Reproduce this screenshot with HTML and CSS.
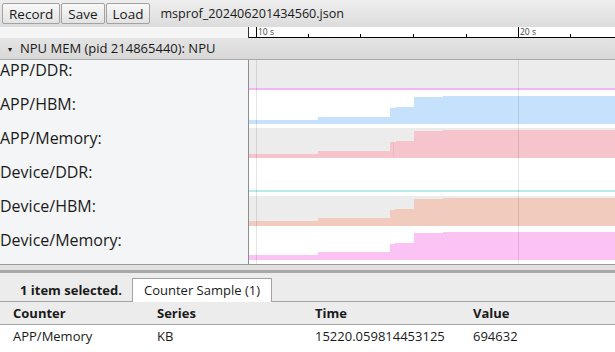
FILE: index.html
```html
<!DOCTYPE html>
<html lang="en">

<head>
    <meta charset="UTF-8">
    <title>Trace viewer</title>
    <link rel="stylesheet" href="styles.css">
</head>

<body>
    <div class="toolbar">
        <button class="btn">Record</button>
        <button class="btn">Save</button>
        <button class="btn">Load</button>
        <span class="filename">msprof_202406201434560.json</span>
    </div>

    <!-- regla de tiempo -->
    <div class="ruler-row">
        <div class="ruler-spacer"></div>
        <svg class="ruler" width="366" height="11">
            <rect x="0" y="10" width="366" height="1" fill="#000"/>
            <rect x="7" y="0" width="1" height="10" fill="#000"/>
            <rect x="269" y="0" width="1" height="10" fill="#000"/>
            <rect x="59" y="7" width="1" height="3" fill="#000"/>
            <rect x="111" y="7" width="1" height="3" fill="#000"/>
            <rect x="164" y="7" width="1" height="3" fill="#000"/>
            <rect x="217" y="7" width="1" height="3" fill="#000"/>
            <rect x="321" y="7" width="1" height="3" fill="#000"/>
            <text x="9" y="8" class="ruler-label">10 s</text>
            <text x="271" y="8" class="ruler-label">20 s</text>
        </svg>
    </div>

    <div class="group-header"><span class="twisty">&#9662;</span>NPU MEM (pid 214865440): NPU</div>

    <div class="tracks">
        <div class="track">
            <div class="track-label">APP/DDR:</div>
            <svg class="track-chart" width="366" height="34">
                <rect x="0" y="0" width="366" height="30" fill="#ececec"/>
                <rect x="0" y="28" width="366" height="2" fill="#f5b4f2"/>
                <rect x="7" y="0" width="1" height="34" class="grid"/>
                <rect x="269" y="0" width="1" height="34" class="grid"/>
            </svg>
        </div>
        <div class="track">
            <div class="track-label">APP/HBM:</div>
            <svg class="track-chart" width="366" height="34">
                <path d="M0 30 V26 H69 V23 H141 V14 H147 V13 H165 V3 H194 V2 H366 V30 Z" fill="#c5e1fc"/>
                <rect x="7" y="0" width="1" height="34" class="grid"/>
                <rect x="269" y="0" width="1" height="34" class="grid"/>
            </svg>
        </div>
        <div class="track">
            <div class="track-label">APP/Memory:</div>
            <svg class="track-chart" width="366" height="34">
                <rect x="0" y="0" width="366" height="30" fill="#ececec"/>
                <path d="M0 30 V26 H69 V23 H141 V14 H147 V13 H165 V3 H194 V2 H366 V30 Z" fill="#f5c4cc"/>
                <rect x="144" y="14" width="1" height="16" fill="#ecb7c1"/>
                <rect x="7" y="0" width="1" height="34" class="grid"/>
                <rect x="269" y="0" width="1" height="34" class="grid"/>
            </svg>
        </div>
        <div class="track">
            <div class="track-label">Device/DDR:</div>
            <svg class="track-chart" width="366" height="34">
                <rect x="0" y="28" width="366" height="2" fill="#b9ebea"/>
                <rect x="7" y="0" width="1" height="34" class="grid"/>
                <rect x="269" y="0" width="1" height="34" class="grid"/>
            </svg>
        </div>
        <div class="track">
            <div class="track-label">Device/HBM:</div>
            <svg class="track-chart" width="366" height="34">
                <rect x="0" y="0" width="366" height="30" fill="#ececec"/>
                <path d="M0 30 V25 H69 V22 H141 V14 H146 V13 H165 V3 H194 V2 H366 V30 Z" fill="#f1cbbe"/>
                <rect x="7" y="0" width="1" height="34" class="grid"/>
                <rect x="269" y="0" width="1" height="34" class="grid"/>
            </svg>
        </div>
        <div class="track">
            <div class="track-label">Device/Memory:</div>
            <svg class="track-chart" width="366" height="34">
                <path d="M0 30 V25 H69 V22 H141 V14 H146 V13 H165 V3 H194 V2 H366 V30 Z" fill="#fbc3f4"/>
                <rect x="7" y="0" width="1" height="34" class="grid"/>
                <rect x="269" y="0" width="1" height="34" class="grid"/>
            </svg>
        </div>
    </div>

    <div class="splitter"></div>

    <div class="analysis">
        <div class="tabs">
            <span class="selection">1 item selected.</span>
            <span class="tab">Counter Sample (1)</span>
        </div>
        <table class="samples">
            <thead>
                <tr>
                    <th class="col-counter">Counter</th>
                    <th class="col-series">Series</th>
                    <th class="col-time">Time</th>
                    <th>Value</th>
                </tr>
            </thead>
            <tbody>
                <tr>
                    <td>APP/Memory</td>
                    <td>KB</td>
                    <td>15220.059814453125</td>
                    <td>694632</td>
                </tr>
            </tbody>
        </table>
    </div>
</body>

</html>
```

FILE: styles.css
```css
body {
    margin: 0;
    width: 615px;
    height: 352px;
    overflow: hidden;
    font-family: 'Open Sans', 'Noto Sans', sans-serif;
    color: #1a1a1a;
    background: #ececec;
}
.toolbar {
    display: flex;
    align-items: center;
    gap: 1px;
    height: 27px;
    padding: 0 2px;
    box-sizing: border-box;
    background: linear-gradient(#eeeeee, #dcdcdc);
}
.btn {
    height: 21px;
    padding: 0 6px;
    margin: 0;
    font-family: inherit;
    font-size: 13.5px;
    color: #1a1a1a;
    border: 1px solid #a3a3a3;
    border-radius: 2px;
    background: linear-gradient(#f8f8f8, #e3e3e3);
}
.filename {
    margin-left: 9px;
    font-size: 12.6px;
}
.ruler-row {
    display: flex;
    height: 11px;
    background: #fff;
}
.ruler-spacer {
    width: 248px;
    border-right: 1px solid #333;
    background: #f5f5f5;
}
.ruler {
    display: block;
    overflow: visible;
}
.ruler-label {
    font-size: 8.5px;
    fill: #444;
}
.group-header {
    height: 21px;
    line-height: 21px;
    padding-left: 8px;
    font-size: 13px;
    border-bottom: 1px solid #a9a9a9;
    background: linear-gradient(#e4e4e4, #d8d8d8);
}
.twisty {
    display: inline-block;
    width: 12px;
    font-size: 8px;
    vertical-align: top;
}
.tracks {
    background: #fff;
    border-bottom: 1px solid #9a9a9a;
}
.track {
    display: flex;
    height: 34px;
}
.track-label {
    width: 248px;
    border-right: 1px solid #8e8e8e;
    background: #f4f5f7;
    font-size: 16px;
    line-height: 20px;
    white-space: nowrap;
}
.track-chart {
    display: block;
}
.grid {
    fill: rgba(0, 0, 0, 0.1);
}
.splitter {
    height: 8px;
    background: linear-gradient(#e2e2e2 0, #e2e2e2 5px, #a8a8a8 5px, #a8a8a8 8px);
}
.tabs {
    display: flex;
    align-items: flex-end;
    height: 28px;
    border-bottom: 1px solid #a3a3a3;
    font-size: 13px;
}
.selection {
    width: 132px;
    box-sizing: border-box;
    padding-left: 20px;
    line-height: 24px;
    margin-bottom: -1px;
    font-weight: bold;
}
.tab {
    height: 23px;
    line-height: 23px;
    padding: 0 11px;
    margin-bottom: -1px;
    border: 1px solid #a3a3a3;
    border-bottom: none;
    background: #fff;
}
.samples {
    width: 100%;
    border-collapse: collapse;
    font-size: 13px;
}
.samples th {
    height: 22px;
    padding: 0 0 0 13px;
    text-align: left;
    font-weight: bold;
    background: #ececec;
    border-bottom: 1px solid #a3a3a3;
}
.samples td {
    height: 30px;
    padding: 2px 0 0 13px;
    line-height: 18px;
    background: #fff;
    vertical-align: top;
}
.col-counter {
    width: 131px;
}
.col-series {
    width: 145px;
}
.col-time {
    width: 145px;
}
```
